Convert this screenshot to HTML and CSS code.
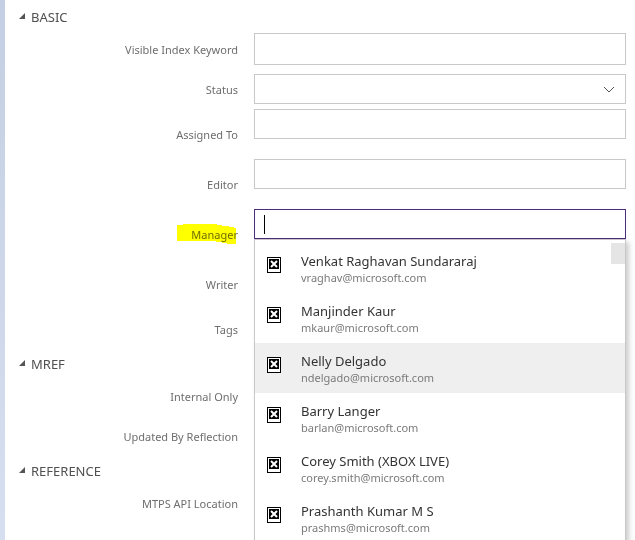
FILE: index.html
```html
<!DOCTYPE html>
<html lang="en">
<head>
<meta charset="utf-8">
<title>Work item</title>
<link rel="stylesheet" href="styles.css">
</head>
<body>
<svg class="symbols" aria-hidden="true">
  <symbol id="broken" viewBox="0 0 14 16">
    <path fill="#000" d="M0 0h14v16H0z"/>
    <path fill="#fff" d="M1 1h12v14H1z"/>
    <path fill="#000" d="M2 2h10v10H2z"/>
    <path stroke="#fff" stroke-width="2" d="M4 4l6 6M10 4l-6 6"/>
  </symbol>
  <symbol id="expanded" viewBox="0 0 6 6">
    <path fill="#555" d="M6 0v6H0z"/>
  </symbol>
</svg>
<main class="form">
  <section>
    <h2 class="heading"><svg class="arrow"><use href="#expanded"/></svg>BASIC</h2>
    <div class="row">
      <label class="label" for="keyword">Visible Index Keyword</label>
      <input class="field tall" id="keyword" type="text">
    </div>
    <div class="row">
      <label class="label" for="status">Status</label>
      <div class="select">
        <select class="field" id="status"><option></option></select>
        <svg class="chevron" viewBox="0 0 12 7"><path d="M1 1l5 5 5-5" fill="none" stroke="#555"/></svg>
      </div>
    </div>
    <div class="row person">
      <label class="label" for="assigned">Assigned To</label>
      <input class="field" id="assigned" type="text">
    </div>
    <div class="row person">
      <label class="label" for="editor">Editor</label>
      <input class="field" id="editor" type="text">
    </div>
    <div class="row person">
      <label class="label marked" for="manager">
        <svg class="marker" viewBox="0 0 59 20"><path fill="#ff0" d="M0 1h6V0h34v1h5v1h7v1h5v1h2v16h-9v-1h-5v-1h-6v-1H0z"/></svg>
        <span class="marked-text">Manager</span>
      </label>
      <div class="picker">
        <input class="field active" id="manager" type="text">
        <span class="caret"></span>
        <ul class="menu">
          <li class="option"><svg class="photo"><use href="#broken"/></svg><div><div class="name">Venkat Raghavan Sundararaj</div><div class="mail">vraghav@microsoft.com</div></div></li>
          <li class="option"><svg class="photo"><use href="#broken"/></svg><div><div class="name">Manjinder Kaur</div><div class="mail">mkaur@microsoft.com</div></div></li>
          <li class="option hovered"><svg class="photo"><use href="#broken"/></svg><div><div class="name">Nelly Delgado</div><div class="mail">ndelgado@microsoft.com</div></div></li>
          <li class="option"><svg class="photo"><use href="#broken"/></svg><div><div class="name">Barry Langer</div><div class="mail">barlan@microsoft.com</div></div></li>
          <li class="option"><svg class="photo"><use href="#broken"/></svg><div><div class="name">Corey Smith (XBOX LIVE)</div><div class="mail">corey.smith@microsoft.com</div></div></li>
          <li class="option"><svg class="photo"><use href="#broken"/></svg><div><div class="name">Prashanth Kumar M S</div><div class="mail">prashms@microsoft.com</div></div></li>
        </ul>
      </div>
    </div>
    <div class="row person">
      <label class="label" for="writer">Writer</label>
      <input class="field" id="writer" type="text">
    </div>
    <div class="row">
      <label class="label" for="tags">Tags</label>
      <input class="field" id="tags" type="text">
    </div>
  </section>
  <section>
    <h2 class="heading"><svg class="arrow"><use href="#expanded"/></svg>MREF</h2>
    <div class="row">
      <label class="label" for="internal">Internal Only</label>
      <input class="field" id="internal" type="text">
    </div>
    <div class="row">
      <label class="label" for="updated">Updated By Reflection</label>
      <input class="field" id="updated" type="text">
    </div>
  </section>
  <section>
    <h2 class="heading"><svg class="arrow"><use href="#expanded"/></svg>REFERENCE</h2>
    <div class="row">
      <label class="label" for="location">MTPS API Location</label>
      <input class="field" id="location" type="text">
    </div>
    <div class="row">
      <label class="label" for="type">MTPS API Type</label>
      <input class="field" id="type" type="text">
    </div>
  </section>
</main>
</body>
</html>
```
FILE: styles.css
```css
* {
  box-sizing: border-box;
}

body {
  margin: 0;
  height: 100vh;
  overflow: hidden;
  background: #fff;
  font-family: "Segoe UI", "Noto Sans", "Open Sans", sans-serif;
  color: #6e6e6e;
}

.symbols {
  display: none;
}

.form {
  min-height: 100vh;
  padding: 2px 9px 0 0;
  border-left: 5px solid;
  border-image: linear-gradient(#c5cfe3, #d6e0f0) 1;
}

.heading {
  display: flex;
  align-items: center;
  gap: 6px;
  height: 27px;
  margin: 0;
  padding: 2px 0 0 14px;
  font-size: 13px;
  font-weight: 400;
  color: #505050;
}

.arrow {
  width: 6px;
  height: 6px;
  margin-bottom: 2px;
}

.row {
  display: grid;
  grid-template-columns: 233px 1fr;
  column-gap: 16px;
  align-items: center;
  height: 40px;
}

.person {
  height: 50px;
  align-items: start;
}

.label {
  padding-top: 2px;
  font-size: 11px;
  line-height: 16px;
  text-align: right;
}

.person .label {
  align-self: center;
}

.field {
  display: block;
  width: 100%;
  height: 30px;
  margin: 0;
  padding: 0 9px;
  border: 1px solid #c8c8c8;
  border-radius: 0;
  background: #fff;
  font: inherit;
  outline: 0;
  appearance: none;
}

.tall {
  height: 32px;
}

.active {
  border-color: #4f2b7c;
}

.select,
.picker,
.marked {
  position: relative;
}

.chevron {
  position: absolute;
  top: 12px;
  right: 11px;
  width: 12px;
  height: 7px;
  pointer-events: none;
}

.marker {
  position: absolute;
  top: -1px;
  right: 2px;
  width: 59px;
  height: 20px;
}

.marked-text {
  position: relative;
  mix-blend-mode: multiply;
}

.caret {
  position: absolute;
  top: 6px;
  left: 10px;
  width: 1px;
  height: 19px;
  background: #000;
}

.menu {
  position: absolute;
  z-index: 1;
  top: 30px;
  left: 0;
  right: 0;
  margin: 0;
  padding: 3px 0;
  border: 1px solid #c8c8c8;
  background: #fff;
  box-shadow: 3px 3px 5px rgba(0, 0, 0, 0.2);
  list-style: none;
}

.menu::after {
  content: "";
  position: absolute;
  top: 3px;
  right: 0;
  width: 14px;
  height: 21px;
  background: #e5e5e5;
}

.option {
  display: flex;
  align-items: flex-start;
  gap: 20px;
  height: 50px;
  padding: 10px 12px 0;
}

.hovered {
  background: #efefef;
}

.photo {
  width: 14px;
  height: 16px;
  margin-top: 4px;
}

.name {
  font-size: 13px;
  line-height: 17px;
  color: #333;
}

.mail {
  font-size: 11px;
  line-height: 16px;
  color: #7a7a7a;
}
```
